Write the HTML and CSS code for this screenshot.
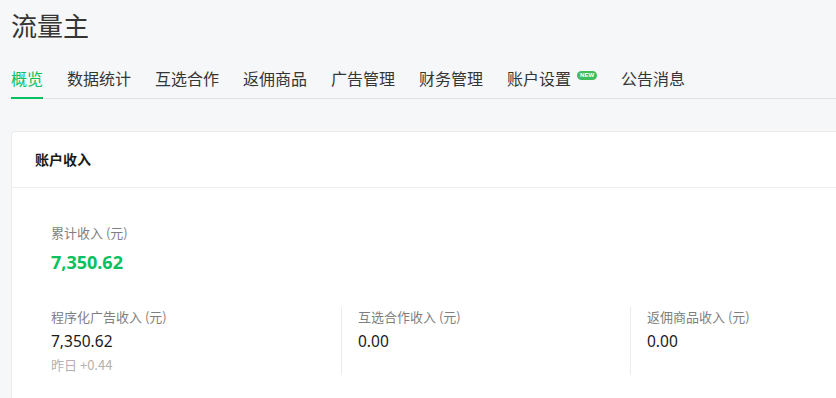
FILE: index.html
```html
<!DOCTYPE html>
<html lang="zh-CN">
<head>
  <meta charset="UTF-8" />
  <meta name="viewport" content="width=device-width, initial-scale=1.0"/>
  <title>流量主</title>
  <link rel="stylesheet" href="styles.css">
</head>
<body>
  <div class="page">
    <h1 class="title">流量主</h1>

    <div class="tabs">
      <a class="tab active">概览</a>
      <a class="tab">数据统计</a>
      <a class="tab">互选合作</a>
      <a class="tab">返佣商品</a>
      <a class="tab">广告管理</a>
      <a class="tab">财务管理</a>
      <a class="tab">账户设置<span class="badge">NEW</span></a>
      <a class="tab">公告消息</a>
    </div>

    <div class="card">
      <div class="card-head">账户收入</div>
      <div class="card-body">
        <div class="total">
          <div class="label">累计收入 (元)</div>
          <div class="total-value">7,350.62</div>
        </div>
        <div class="stats">
          <div class="stat">
            <div class="label">程序化广告收入 (元)</div>
            <div class="value">7,350.62</div>
            <div class="sub">昨日 +0.44</div>
          </div>
          <div class="stat">
            <div class="label">互选合作收入 (元)</div>
            <div class="value">0.00</div>
          </div>
          <div class="stat">
            <div class="label">返佣商品收入 (元)</div>
            <div class="value">0.00</div>
          </div>
        </div>
      </div>
    </div>
  </div>
</body>
</html>
```

FILE: styles.css
```css
body {
  margin: 0;
  background-color: #f6f7f9;
  font-family: "Noto Sans CJK SC", "Noto Sans", sans-serif;
  color: #353535;
}
.page {
  padding-left: 11px;
}
.title {
  margin: 0;
  padding-top: 7px;
  font-size: 26px;
  line-height: 36px;
  font-weight: normal;
  color: #353535;
}
.tabs {
  display: flex;
  margin-top: 23px;
  border-bottom: 1px solid #e1e2e5;
}
.tab {
  position: relative;
  display: block;
  margin-right: 24px;
  padding-bottom: 8px;
  font-size: 16px;
  line-height: 24px;
  color: #353535;
  cursor: pointer;
}
.tab.active {
  color: #07c160;
}
.tab.active::after {
  content: "";
  position: absolute;
  left: 0;
  right: 0;
  bottom: -1px;
  height: 2px;
  background-color: #07c160;
}
.badge {
  display: inline-block;
  vertical-align: top;
  margin: 5px 0 0 6px;
  width: 20px;
  height: 9px;
  border-radius: 5px;
  background-color: #3fbf5a;
  color: #fff;
  font-family: "Liberation Sans", sans-serif;
  font-size: 6px;
  font-weight: bold;
  line-height: 9px;
  text-align: center;
}
.card {
  margin-top: 32px;
  background-color: #fff;
  border: 1px solid #ebebeb;
  border-right: none;
  border-radius: 4px 0 0 4px;
}
.card-head {
  height: 55px;
  line-height: 55px;
  padding-left: 23px;
  font-size: 14px;
  font-weight: bold;
  color: #1a1a1a;
  border-bottom: 1px solid #eeeeee;
}
.card-body {
  padding: 35px 0 40px 39px;
}
.label {
  font-size: 13px;
  line-height: 20px;
  color: #7f7f7f;
}
.total-value {
  margin-top: 5px;
  font-family: "Noto Sans", sans-serif;
  font-size: 18px;
  line-height: 28px;
  font-weight: bold;
  color: #07c160;
}
.stats {
  display: flex;
  margin-top: 31px;
}
.stat {
  box-sizing: border-box;
  flex: 0 0 290px;
  height: 68px;
}
.stat + .stat {
  flex-basis: 289px;
  padding-left: 16px;
  border-left: 1px solid #ececec;
}
.stat:last-child {
  flex: 1 1 auto;
}
.value {
  margin-top: 2px;
  font-family: "Noto Sans", sans-serif;
  font-size: 15.5px;
  line-height: 24px;
  color: #1a1a1a;
}
.sub {
  margin-top: 2px;
  font-size: 13px;
  line-height: 20px;
  color: #b2b2b2;
}
```
